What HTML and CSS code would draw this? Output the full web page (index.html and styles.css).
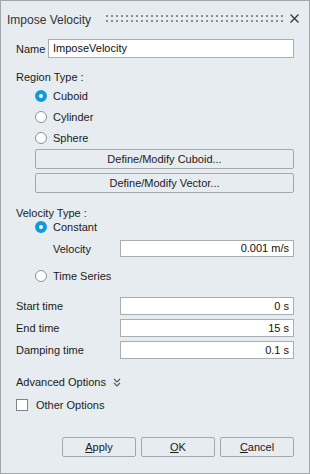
FILE: index.html
```html
<!DOCTYPE html>
<html>
<head>
<meta charset="utf-8">
<link rel="stylesheet" href="styles.css">
</head>
<body>
<div class="window">
  <div class="titlebar">
    <span class="title">Impose Velocity</span>
    <span class="grip"></span>
    <svg class="close" width="9" height="9" viewBox="0 0 9 9"><path d="M0.5 0.5L8.5 8.5M8.5 0.5L0.5 8.5" stroke="#333" stroke-width="1.2" fill="none"/></svg>
  </div>
  <div class="content">
    <div class="row name-row">
      <span class="name-label">Name</span>
      <div class="input name-input">ImposeVelocity</div>
    </div>

    <div class="section-label region-label">Region Type :</div>
    <div class="radios region-radios">
      <div class="radio-row"><span class="radio checked"></span><span>Cuboid</span></div>
      <div class="radio-row"><span class="radio"></span><span>Cylinder</span></div>
      <div class="radio-row"><span class="radio"></span><span>Sphere</span></div>
    </div>
    <div class="wide-buttons">
      <div class="btn wide">Define/Modify Cuboid...</div>
      <div class="btn wide">Define/Modify Vector...</div>
    </div>

    <div class="section-label velocity-label">Velocity Type :</div>
    <div class="radio-row tight"><span class="radio checked"></span><span>Constant</span></div>
    <div class="row velocity-row">
      <span class="field-label">Velocity</span>
      <div class="input num">0.001 m/s</div>
    </div>
    <div class="radio-row series"><span class="radio"></span><span>Time Series</span></div>

    <div class="times">
      <div class="row time-row"><span class="time-label">Start time</span><div class="input num">0 s</div></div>
      <div class="row time-row"><span class="time-label">End time</span><div class="input num">15 s</div></div>
      <div class="row time-row"><span class="time-label">Damping time</span><div class="input num">0.1 s</div></div>
    </div>

    <div class="advanced">
      <span class="adv-text">Advanced Options</span>
      <svg class="chev" width="8" height="9" viewBox="0 0 8 9"><path d="M1 1L4 4L7 1M1 5L4 8L7 5" stroke="#555" stroke-width="1.1" fill="none"/></svg>
    </div>
    <div class="check-row"><span class="checkbox"></span><span>Other Options</span></div>

    <div class="footer">
      <div class="btn foot"><u>A</u>pply</div>
      <div class="btn foot"><u>O</u>K</div>
      <div class="btn foot"><u>C</u>ancel</div>
    </div>
  </div>
</div>
</body>
</html>
```

FILE: styles.css
```css
* { box-sizing: border-box; }
html, body { margin: 0; padding: 0; }
body {
  font-family: "Liberation Sans", Arial, sans-serif;
  font-size: 11px;
  color: #1b1b1b;
  background: #e6ecf0;
}
.window {
  width: 310px;
  height: 474px;
  border: 1px solid #a3a7ab;
  background: #e6ecf0;
  display: flex;
  flex-direction: column;
}
.titlebar {
  height: 38px;
  padding: 11px 10px 0 6px;
  display: flex;
  align-items: flex-start;
}
.title {
  font-size: 12px;
  line-height: 16px;
  color: #333;
}
.grip {
  width: 178px;
  height: 7px;
  margin: 3px 0 0 15px;
  background: conic-gradient(from -90deg at 2px 2px, #8a8f94 25%, transparent 0) 0 0 / 5px 5px;
}
.close { margin: 2px 0 0 6px; }
.content {
  padding: 0 15px;
  display: flex;
  flex-direction: column;
}
.row { display: flex; align-items: center; }
.input {
  background: #fff;
  border: 1px solid #aaaeb2;
  height: 18px;
  line-height: 16px;
  padding: 0 4px;
  flex: 1;
  color: #111;
}
.name-row { height: 19px; }
.name-label { width: 32px; }
.name-input { height: 19px; line-height: 17px; padding-left: 4px; }
.section-label { line-height: 16px; }
.region-label { margin-top: 11px; }
.region-radios { padding-left: 19px; }
.radio-row {
  height: 21px;
  display: flex;
  align-items: center;
  gap: 6px;
}
.radio {
  width: 12px;
  height: 12px;
  border-radius: 50%;
  border: 1px solid #8d9196;
  background: #fff;
  flex: none;
}
.radio.checked {
  border: 4px solid #0f9ae0;
  background: #fff;
}
.wide-buttons {
  margin: 1px 0 0 19px;
  display: flex;
  flex-direction: column;
  gap: 4px;
}
.btn {
  height: 20px;
  border: 1px solid #a4a8ac;
  border-radius: 2px;
  background: #e6ecf0;
  display: flex;
  align-items: center;
  justify-content: center;
  color: #1b1b1b;
}
.velocity-label { margin-top: 13px; line-height: 14px; }
.radio-row.tight { height: 14px; padding-left: 19px; }
.velocity-row { margin-top: 6px; padding-left: 37px; height: 17px; }
.field-label { width: 67px; }
.velocity-row .input { height: 17px; line-height: 15px; }
.num { text-align: right; padding-right: 4px; }
.radio-row.series { margin-top: 12px; height: 14px; padding-left: 19px; }
.times {
  margin-top: 14px;
  display: flex;
  flex-direction: column;
  gap: 4px;
}
.time-row { height: 18px; }
.time-label { width: 104px; }
.advanced {
  margin-top: 15px;
  height: 16px;
  display: flex;
  align-items: center;
}
.adv-text { line-height: 16px; white-space: nowrap; }
.chev { margin-left: 7px; }
.check-row {
  margin-top: 7px;
  height: 16px;
  display: flex;
  align-items: center;
  gap: 8px;
}
.checkbox {
  width: 12px;
  height: 12px;
  border: 1px solid #7f8388;
  background: #fff;
}
.footer {
  margin-top: 24px;
  display: flex;
  justify-content: flex-end;
  gap: 5px;
}
.btn.foot { width: 74px; height: 20px; }
.btn u { text-decoration: underline; }
```
